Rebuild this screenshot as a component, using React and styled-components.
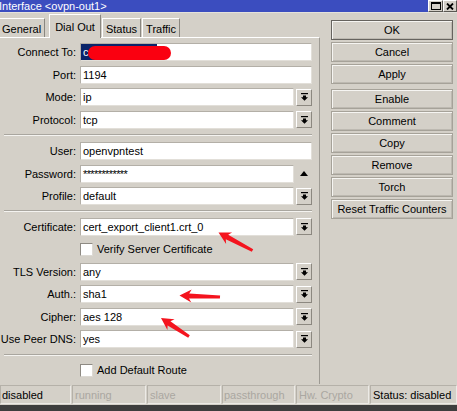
import React from "react";
import styled, { createGlobalStyle } from "styled-components";

const Global = createGlobalStyle`
  html, body { margin: 0; padding: 0; background: #d4d0c8; overflow: hidden; }
  body { font-family: "Liberation Sans", Arial, sans-serif; font-size: 11px; color: #000; }
`;

const Window = styled.div`
  position: relative;
  width: 457px;
  height: 411px;
  display: flex;
  flex-direction: column;
  background: #d4d0c8;
  overflow: hidden;
`;

const TitleBar = styled.div`
  height: 12px;
  border-bottom: 1px solid #e4e2dc;
  background: #3b4dbf;
  color: #fff;
  display: flex;
  align-items: center;
  justify-content: space-between;
  line-height: 12px;
`;

const TitleText = styled.span`
  margin-left: -1px;
  white-space: nowrap;
`;

const TitleButtons = styled.div`
  display: flex;
  align-self: stretch;
`;

const TitleButton = styled.div`
  width: ${(p) => p.$w}px;
  height: 12px;
  box-sizing: border-box;
  background: #d4d0c8;
  border-top: 1px solid #fff;
  border-left: 1px solid #fff;
  border-right: 1px solid #5a5852;
  border-bottom: 1px solid #5a5852;
  display: flex;
  align-items: center;
  justify-content: center;
`;

const Main = styled.div`
  flex: 1;
  display: flex;
  min-height: 0;
`;

const LeftCol = styled.div`
  width: 320px;
  display: flex;
  flex-direction: column;
`;

const TabStrip = styled.div`
  height: 24px;
  display: flex;
  align-items: flex-end;
  gap: 1px;
  position: relative;
  z-index: 1;
`;

const Tab = styled.div`
  box-sizing: border-box;
  height: ${(p) => (p.$active ? 24 : 19)}px;
  padding: ${(p) => (p.$active ? "0 5px" : "1px 3px 0")};
  margin-left: ${(p) => p.$ml || 0}px;
  margin-bottom: ${(p) => (p.$active ? -1 : 0)}px;
  background: #d4d0c8;
  border-top: 1px solid #fff;
  border-left: 1px solid #fff;
  border-right: 1px solid #8a8780;
  display: flex;
  align-items: center;
  justify-content: center;
  white-space: nowrap;
`;

const Panel = styled.div`
  flex: 1;
  border-top: 1px solid #fff;
  border-right: 1px solid #9d9a93;
  padding-top: 5px;
  display: flex;
  flex-direction: column;
`;

const Group = styled.div`
  display: flex;
  flex-direction: column;
  gap: 4.5px;
`;

const Separator = styled.div`
  height: 0;
  border-top: 1px solid #a9a69f;
  border-bottom: 1px solid #f4f3f0;
  margin: ${(p) => p.$top}px 7px ${(p) => p.$bottom}px 4px;
`;

const Row = styled.div`
  display: grid;
  grid-template-columns: 76px 1fr;
  column-gap: 4px;
  align-items: center;
  height: 18px;
  padding-right: 7px;
`;

const Label = styled.div`
  text-align: right;
  white-space: nowrap;
`;

const Field = styled.div`
  display: flex;
  gap: 2px;
  height: 18px;
  align-items: center;
`;

const TextBox = styled.div`
  flex: 1;
  position: relative;
  box-sizing: border-box;
  height: 18px;
  background: #fff;
  border-top: 1px solid #b3afa7;
  border-left: 1px solid #b3afa7;
  border-bottom: 1px solid #e2dfd9;
  border-right: 1px solid #e2dfd9;
  padding: 0 2px;
  display: flex;
  align-items: center;
  overflow: hidden;
  white-space: nowrap;
  letter-spacing: ${(p) => (p.$masked ? "-0.6px" : "normal")};
`;

const Selection = styled.span`
  align-self: stretch;
  margin-left: -2px;
  padding-left: 2px;
  width: 76px;
  box-sizing: border-box;
  background: #0a246a;
  color: #fff;
  display: flex;
  align-items: center;
`;

const Redaction = styled.span`
  position: absolute;
  left: 7px;
  top: 2px;
  width: 83px;
  height: 14px;
  border-radius: 7px;
  background: #fa0010;
`;

const DropButton = styled.div`
  width: 16px;
  height: 17px;
  box-sizing: border-box;
  background: #d4d0c8;
  border-top: 1px solid #fff;
  border-left: 1px solid #fff;
  border-right: 1px solid #8c8880;
  border-bottom: 1px solid #8c8880;
  display: flex;
  align-items: center;
  justify-content: center;
`;

const SpinButton = styled.div`
  width: 16px;
  height: 17px;
  display: flex;
  align-items: center;
  justify-content: center;
`;

const CheckLine = styled.div`
  display: flex;
  align-items: center;
  gap: 4px;
  white-space: nowrap;
`;

const CheckBox = styled.span`
  width: 13px;
  height: 13px;
  box-sizing: border-box;
  background: #fff;
  border-top: 1px solid #8e8a83;
  border-left: 1px solid #8e8a83;
  border-bottom: 1px solid #dcd9d3;
  border-right: 1px solid #dcd9d3;
`;

const RightCol = styled.div`
  margin-left: 11px;
  width: 122px;
  padding-top: 7px;
  display: flex;
  flex-direction: column;
  gap: 2px;
`;

const Button = styled.div`
  height: 20px;
  box-sizing: border-box;
  border: 1px solid ${(p) => (p.$default ? "#66635e" : "#a6a299")};
  box-shadow: inset 1px 1px 0 #f6f5f2, inset -1px -1px 0 #bdb9b1;
  background: #d4d0c8;
  display: flex;
  align-items: center;
  justify-content: center;
  white-space: nowrap;
  margin-top: ${(p) => p.$mt || 0}px;
`;

const StatusBar = styled.div`
  height: 21px;
  box-sizing: border-box;
  padding-top: 1px;
  display: flex;
  gap: 1px;
`;

const StatusCell = styled.div`
  width: ${(p) => (p.$w ? `${p.$w}px` : "auto")};
  flex: ${(p) => (p.$w ? "none" : 1)};
  height: 19px;
  box-sizing: border-box;
  border: 1px solid #b5b1a9;
  border-right-color: #eceae6;
  border-bottom-color: #eceae6;
  color: ${(p) => (p.$dim ? "#aaa7a1" : "#000")};
  padding-left: ${(p) => p.$pl ?? 2}px;
  display: flex;
  align-items: center;
  white-space: nowrap;
  overflow: hidden;
`;

const BottomStrip = styled.div`
  height: 6px;
  background: #3e3e3e;
`;

const Overlay = styled.svg`
  position: absolute;
  left: 0;
  top: 0;
  pointer-events: none;
`;

const DropIcon = () => (
  <svg width="7" height="8" viewBox="0 0 7 8">
    <rect x="0" y="0" width="7" height="1.2" fill="#000" />
    <path d="M2 2.4h3v1.8h2L3.5 7.8 0 4.2h2z" fill="#000" />
  </svg>
);

const UpIcon = () => (
  <svg width="8" height="5" viewBox="0 0 8 5">
    <path d="M0 5L4 0l4 5z" fill="#000" />
  </svg>
);

function arrowPoints(tx, ty, sx, sy, headLen = 12, headW = 13, shaftW = 5, tailW = 3) {
  const dx = tx - sx;
  const dy = ty - sy;
  const len = Math.hypot(dx, dy);
  const ux = dx / len;
  const uy = dy / len;
  const nx = -uy;
  const ny = ux;
  const bx = tx - ux * (headLen * 0.8);
  const by = ty - uy * (headLen * 0.8);
  const cx = tx - ux * headLen;
  const cy = ty - uy * headLen;
  const pts = [
    [sx + (nx * tailW) / 2, sy + (ny * tailW) / 2],
    [bx + (nx * shaftW) / 2, by + (ny * shaftW) / 2],
    [cx + (nx * headW) / 2, cy + (ny * headW) / 2],
    [tx, ty],
    [cx - (nx * headW) / 2, cy - (ny * headW) / 2],
    [bx - (nx * shaftW) / 2, by - (ny * shaftW) / 2],
    [sx - (nx * tailW) / 2, sy - (ny * tailW) / 2],
  ];
  return pts.map((p) => p.map((v) => v.toFixed(1)).join(",")).join(" ");
}

const arrows = [
  [218.5, 232.5, 252.5, 250.5],
  [179.5, 295.5, 220, 297],
  [161, 318, 189, 336.5],
];

const FormRow = ({ label, value, drop, spin, masked, children }) => (
  <Row>
    <Label>{label}</Label>
    <Field>
      <TextBox $masked={masked}>{children ?? value}</TextBox>
      {drop && (
        <DropButton>
          <DropIcon />
        </DropButton>
      )}
      {spin && (
        <SpinButton>
          <UpIcon />
        </SpinButton>
      )}
    </Field>
  </Row>
);

const CheckRow = ({ label }) => (
  <Row>
    <span />
    <CheckLine>
      <CheckBox />
      {label}
    </CheckLine>
  </Row>
);

const buttons = [
  { t: "OK", d: true },
  { t: "Cancel" },
  { t: "Apply" },
  { t: "Enable", mt: 3 },
  { t: "Comment" },
  { t: "Copy" },
  { t: "Remove" },
  { t: "Torch" },
  { t: "Reset Traffic Counters" },
];

const statusCells = [
  { t: "disabled", w: 71, pl: 1 },
  { t: "running", w: 74, dim: true },
  { t: "slave", w: 74, dim: true },
  { t: "passthrough", w: 73, dim: true, pl: 1 },
  { t: "Hw. Crypto", w: 73, dim: true },
  { t: "Status: disabled" },
];

export default function App() {
  return (
    <>
      <Global />
      <Window>
        <TitleBar>
          <TitleText>{"Interface <ovpn-out1>"}</TitleText>
          <TitleButtons>
            <TitleButton $w={15}>
              <svg width="10" height="8" viewBox="0 0 10 8">
                <rect x="0.5" y="0.5" width="9" height="7" fill="none" stroke="#000" />
                <rect x="0" y="0" width="10" height="2" fill="#000" />
              </svg>
            </TitleButton>
            <TitleButton $w={14}>
              <svg width="8" height="7" viewBox="0 0 8 7">
                <path d="M1 0.5l6 6M7 0.5l-6 6" stroke="#000" strokeWidth="1.8" />
              </svg>
            </TitleButton>
          </TitleButtons>
        </TitleBar>
        <Main>
          <LeftCol>
            <TabStrip>
              <Tab $ml={-2}>General</Tab>
              <Tab $active $ml={3}>Dial Out</Tab>
              <Tab>Status</Tab>
              <Tab>Traffic</Tab>
            </TabStrip>
            <Panel>
              <Group>
                <FormRow label="Connect To:">
                  <Selection>c</Selection>
                  <Redaction />
                </FormRow>
                <FormRow label="Port:" value="1194" />
                <FormRow label="Mode:" value="ip" drop />
                <FormRow label="Protocol:" value="tcp" drop />
              </Group>
              <Separator $top={5} $bottom={6.5} />
              <Group>
                <FormRow label="User:" value="openvpntest" />
                <FormRow label="Password:" value="************" spin masked />
                <FormRow label="Profile:" value="default" drop />
              </Group>
              <Separator $top={5} $bottom={5.5} />
              <Group>
                <FormRow label="Certificate:" value="cert_export_client1.crt_0" drop />
                <CheckRow label="Verify Server Certificate" />
                <FormRow label="TLS Version:" value="any" drop />
                <FormRow label="Auth.:" value="sha1" drop />
                <FormRow label="Cipher:" value="aes 128" drop />
                <FormRow label="Use Peer DNS:" value="yes" drop />
              </Group>
              <Separator $top={5.5} $bottom={5.5} />
              <CheckRow label="Add Default Route" />
            </Panel>
          </LeftCol>
          <RightCol>
            {buttons.map((b) => (
              <Button key={b.t} $default={b.d} $mt={b.mt}>
                {b.t}
              </Button>
            ))}
          </RightCol>
        </Main>
        <StatusBar>
          {statusCells.map((c) => (
            <StatusCell key={c.t} $w={c.w} $dim={c.dim} $pl={c.pl}>
              {c.t}
            </StatusCell>
          ))}
        </StatusBar>
        <BottomStrip />
        <Overlay width="457" height="411" viewBox="0 0 457 411">
          {arrows.map((a, i) => (
            <polygon key={i} points={arrowPoints(...a)} fill="#f4141e" />
          ))}
        </Overlay>
      </Window>
    </>
  );
}
